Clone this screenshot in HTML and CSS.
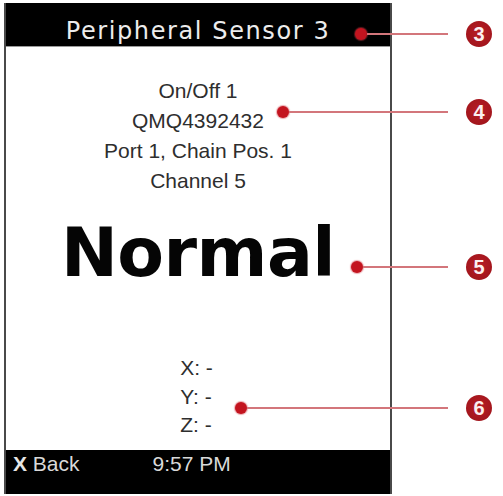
FILE: index.html
```html
<!DOCTYPE html>
<html lang="en">
<head>
<meta charset="utf-8">
<title>Peripheral Sensor 3</title>
<link rel="stylesheet" href="styles.css">
</head>
<body>
<div class="stage">
  <div class="device">
    <div class="hdr">Peripheral Sensor 3</div>
    <div class="screen">
      <div class="info">
        <div>On/Off 1</div>
        <div>QMQ4392432</div>
        <div>Port 1, Chain Pos. 1</div>
        <div>Channel 5</div>
      </div>
      <div class="status">Normal</div>
      <div class="axes">
        <div>X: -</div>
        <div>Y: -</div>
        <div>Z: -</div>
      </div>
    </div>
    <div class="ftr">
      <span class="back"><b>X</b> Back</span>
      <span class="time">9:57 PM</span>
    </div>
  </div>

  <div class="callout c3"><span class="dot"></span><span class="line"></span><span class="badge">3</span></div>
  <div class="callout c4"><span class="dot"></span><span class="line"></span><span class="badge">4</span></div>
  <div class="callout c5"><span class="dot"></span><span class="line"></span><span class="badge">5</span></div>
  <div class="callout c6"><span class="dot"></span><span class="line"></span><span class="badge">6</span></div>
</div>
</body>
</html>
```
FILE: styles.css
```css
* { box-sizing: border-box; }
html, body { margin: 0; padding: 0; background: #fff; }
body { font-family: "Liberation Sans", Arial, sans-serif; }

.stage {
  position: relative;
  width: 503px;
  height: 496px;
  padding: 3px 0 0 4px;
}

.device {
  width: 388px;
  border-left: 2px solid #4a4a4a;
  border-right: 2px solid #4a4a4a;
  display: flex;
  flex-direction: column;
}

.hdr {
  height: 44px;
  background: #000;
  color: #ececec;
  font-family: "DejaVu Sans", Verdana, sans-serif;
  font-size: 24px;
  letter-spacing: 1.6px;
  line-height: 26px;
  padding-top: 15px;
  text-align: center;
  white-space: nowrap;
  overflow: hidden;
  border-bottom: 1px solid #9a9a9a;
}

.screen {
  height: 403px;
  background: #fff;
  display: flex;
  flex-direction: column;
  align-items: center;
  padding-top: 29px;
  color: #2e2e2e;
}

.info {
  font-size: 21px;
  line-height: 30px;
  text-align: center;
}

.status {
  margin-top: 23px;
  font-family: "DejaVu Sans", Verdana, sans-serif;
  font-weight: bold;
  font-size: 68px;
  line-height: 68px;
  color: #050505;
  letter-spacing: -0.5px;
}

.axes {
  margin-top: 67px;
  margin-right: 3px;
  font-size: 21px;
  line-height: 28.5px;
  text-align: left;
}

.ftr {
  height: 44px;
  background: #000;
  color: #d9d9d9;
  font-size: 21px;
  line-height: 24px;
  padding: 2px 0 0 7px;
  display: flex;
  white-space: nowrap;
}
.ftr b { font-weight: bold; color: #e6e6e6; }
.time { margin-left: 73px; }

.callout {
  position: absolute;
  right: 11px;
  height: 26px;
  display: flex;
  align-items: center;
}
.c3 { left: 355px; top: 21px; }
.c4 { left: 277px; top: 99px; }
.c5 { left: 351px; top: 254px; }
.c6 { left: 235px; top: 395px; }

.dot {
  width: 12px;
  height: 12px;
  border-radius: 50%;
  background: #c3141f;
  box-shadow: 0 0 1px 1px rgba(210, 60, 70, 0.45);
  flex: none;
}
.line {
  flex: 1;
  height: 2px;
  background: #d3767b;
}
.badge {
  flex: none;
  width: 26px;
  height: 26px;
  margin-left: 18px;
  border-radius: 50%;
  background: radial-gradient(circle at 50% 45%, #b81d25 0%, #a3161d 70%, #8c1016 100%);
  color: #fbeff0;
  font-family: "Liberation Sans", Arial, sans-serif;
  font-weight: bold;
  font-size: 20px;
  line-height: 26px;
  text-align: center;
}
```
